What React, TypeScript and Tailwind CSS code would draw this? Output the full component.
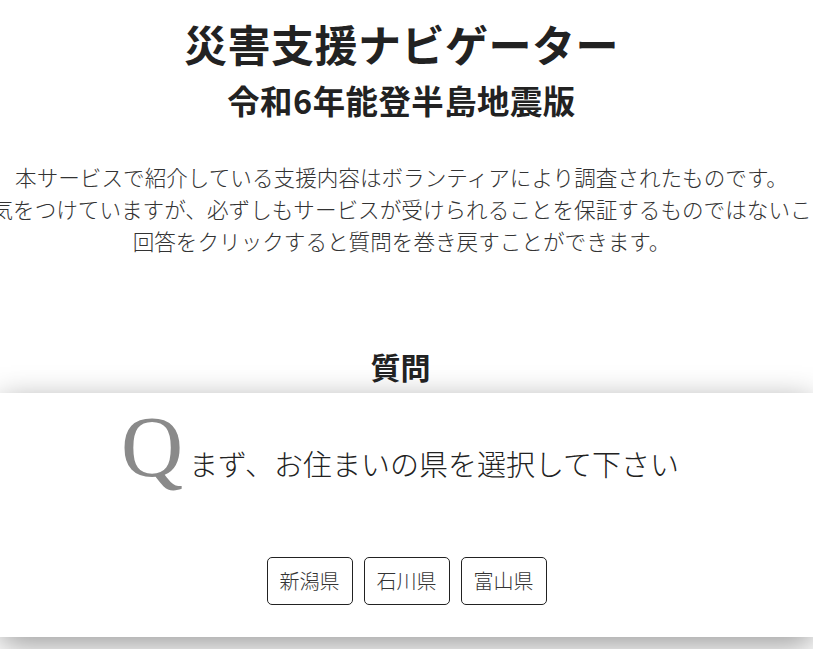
import React from 'react'

const prefs = ['新潟県', '石川県', '富山県']

export default function App() {
  return (
    <div className="min-h-screen bg-white text-[#222] font-['Noto_Sans_CJK_JP','Noto_Sans',sans-serif]">
      {/* タイトル */}
      <header className="flex flex-col items-center pr-[10px] pt-[13px]">
        <h1 className="text-[43px] font-bold leading-[1.4] tracking-[0.5px]">災害支援ナビゲーター</h1>
        <h2 className="mt-[4px] text-[32.4px] font-bold leading-[1.4] tracking-[0.5px]">令和6年能登半島地震版</h2>
      </header>

      {/* 注意書き */}
      <div className="mt-[38px] flex flex-col items-center overflow-x-hidden pr-[10px] text-[21.6px] font-light leading-[32px] text-[#333]">
        <p className="whitespace-nowrap">本サービスで紹介している支援内容はボランティアにより調査されたものです。</p>
        <p className="whitespace-nowrap">情報の正確性には十分気をつけていますが、必ずしもサービスが受けられることを保証するものではないことをご了承ください。</p>
        <p className="whitespace-nowrap">回答をクリックすると質問を巻き戻すことができます。</p>
      </div>

      {/* 質問 */}
      <section className="mt-[88px]">
        <h3 className="pr-[12px] text-center text-[30px] font-bold leading-[1.4]">質問</h3>
        <div className="mt-[6px] bg-white pb-[32px] pt-[11px] shadow-[0_8px_30px_rgba(0,0,0,0.4)]">
          <div className="flex items-baseline justify-center pr-[13px]">
            <span className="font-['Liberation_Serif',serif] text-[86px] leading-none text-[#8a8a8a]">Q</span>
            <span className="ml-[6px] text-[29px] font-light text-[#222]">まず、お住まいの県を選択して下さい</span>
          </div>
          <div className="mt-[67px] flex justify-center gap-[11px]">
            {prefs.map((p) => (
              <button
                key={p}
                className="h-[48px] rounded-[5px] border border-[#222] bg-white px-[12px] text-[20px] font-light text-[#333] hover:bg-gray-100"
              >
                {p}
              </button>
            ))}
          </div>
        </div>
      </section>
    </div>
  )
}
